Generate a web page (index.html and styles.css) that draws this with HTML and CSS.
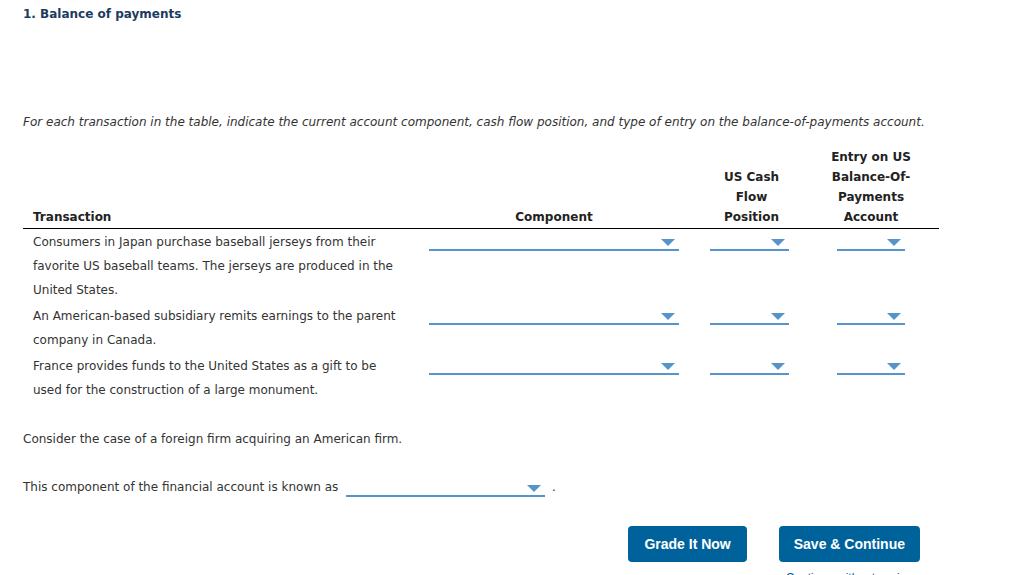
FILE: index.html
```html
<!DOCTYPE html>
<html lang="en">
<head>
<meta charset="utf-8">
<title>Balance of payments</title>
<link rel="stylesheet" href="styles.css">
</head>
<body>
<div class="page">
  <h1 class="title">1. Balance of payments</h1>
  <p class="instr">For each transaction in the table, indicate the current account component, cash flow position, and type of entry on the balance-of-payments account.</p>
  <table class="bop">
    <thead>
      <tr>
        <th class="c-tr">Transaction</th>
        <th class="c-comp">Component</th>
        <th class="c-cash">US Cash<br>Flow<br>Position</th>
        <th class="c-entry">Entry on US<br>Balance-Of-<br>Payments<br>Account</th>
      </tr>
    </thead>
    <tbody>
      <tr>
        <td class="c-tr">Consumers in Japan purchase baseball jerseys from their favorite US baseball teams. The jerseys are produced in the United States.</td>
        <td class="c-comp"><span class="sel w-comp"><span class="arrow"></span></span></td>
        <td class="c-cash"><span class="sel w-cash"><span class="arrow"></span></span></td>
        <td class="c-entry"><span class="sel w-entry"><span class="arrow"></span></span></td>
      </tr>
      <tr>
        <td class="c-tr">An American-based subsidiary remits earnings to the parent company in Canada.</td>
        <td class="c-comp"><span class="sel w-comp"><span class="arrow"></span></span></td>
        <td class="c-cash"><span class="sel w-cash"><span class="arrow"></span></span></td>
        <td class="c-entry"><span class="sel w-entry"><span class="arrow"></span></span></td>
      </tr>
      <tr>
        <td class="c-tr">France provides funds to the United States as a gift to be used for the construction of a large monument.</td>
        <td class="c-comp"><span class="sel w-comp"><span class="arrow"></span></span></td>
        <td class="c-cash"><span class="sel w-cash"><span class="arrow"></span></span></td>
        <td class="c-entry"><span class="sel w-entry"><span class="arrow"></span></span></td>
      </tr>
    </tbody>
  </table>
  <p class="para">Consider the case of a foreign firm acquiring an American firm.</p>
  <p class="para inline-q">This component of the financial account is known as <span class="sel w-inline"><span class="arrow"></span></span> .</p>
  <div class="actions">
    <button class="btn">Grade It Now</button>
    <div class="save-col">
      <button class="btn btn-save">Save &amp; Continue</button>
      <a class="later" href="#">Continue without saving</a>
    </div>
  </div>
</div>
</body>
</html>
```

FILE: styles.css
```css
html, body {
  margin: 0;
  padding: 0;
  background: #fff;
}
body {
  font-family: "DejaVu Sans", Verdana, sans-serif;
  font-size: 12px;
  color: #333;
  overflow: hidden;
}
.page {
  padding: 5px 0 0 23px;
}
.title {
  margin: 0;
  font-size: 12px;
  line-height: 18px;
  font-weight: bold;
  color: #1d3b5e;
}
.instr {
  margin: 90px 0 0 0;
  font-style: italic;
  line-height: 18px;
  color: #333;
}
.bop {
  border-collapse: collapse;
  margin-top: 16px;
  width: 916px;
}
.bop th {
  font-weight: bold;
  color: #222;
  line-height: 20px;
  vertical-align: bottom;
  padding: 0 10px 1px 10px;
  border-bottom: 1px solid #000;
}
.bop th.c-tr { text-align: left; }
.bop th.c-cash { padding-left: 12px; padding-right: 8px; }
.bop td {
  line-height: 24px;
  vertical-align: top;
  padding: 1px 10px;
  color: #333;
}
.c-tr { width: 365px; padding-right: 21px !important; }
.c-comp { width: 250px; text-align: center; }
.c-cash { width: 101px; text-align: center; }
.c-entry { width: 102px; text-align: center; padding-right: 17px !important; }
.sel {
  display: inline-block;
  position: relative;
  height: 19px;
  border-bottom: 2px solid #5794c9;
  vertical-align: top;
}
.w-comp { width: 250px; }
.w-cash { width: 79px; }
.w-entry { width: 68px; }
.w-inline { width: 199px; vertical-align: -6px; margin: 0 3px 0 4px; }
.arrow {
  position: absolute;
  right: 4px;
  top: 9px;
  width: 0;
  height: 0;
  border-left: 7px solid transparent;
  border-right: 7px solid transparent;
  border-top: 7px solid #5794c9;
}
.para {
  margin: 0;
  line-height: 18px;
  color: #333;
}
.bop + .para { margin-top: 27px; }
.inline-q { margin-top: 28px; }
.actions {
  display: flex;
  justify-content: flex-end;
  align-items: flex-start;
  gap: 32px;
  padding-right: 100px;
  margin-top: 29px;
}
.save-col {
  display: flex;
  flex-direction: column;
  align-items: center;
}
.btn {
  font-family: "Liberation Sans", Arial, sans-serif;
  font-weight: bold;
  font-size: 14px;
  color: #fff;
  background: #00629b;
  border: 0;
  border-radius: 4px;
  height: 36px;
  padding: 0 16px;
}
.btn-save { padding: 0 15px; }
.later {
  margin-top: 9px;
  font-family: "Liberation Sans", Arial, sans-serif;
  font-size: 12px;
  color: #00629b;
  text-decoration: none;
}
```
